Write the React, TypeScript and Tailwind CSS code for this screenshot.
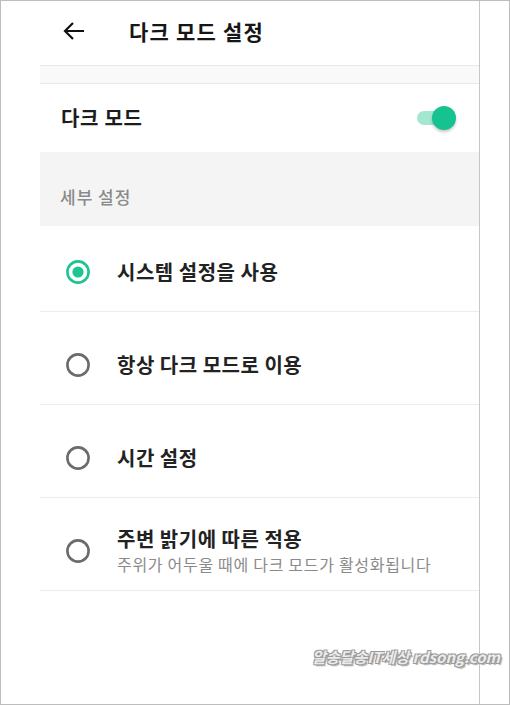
import React from "react";

const options = [
  { label: "시스템 설정을 사용", checked: true },
  { label: "항상 다크 모드로 이용" },
  { label: "시간 설정" },
  { label: "주변 밝기에 따른 적용", sub: "주위가 어두울 때에 다크 모드가 활성화됩니다" },
];

function Radio({ checked }: { checked?: boolean }) {
  return (
    <svg width="24" height="24" viewBox="0 0 24 24" className="shrink-0">
      <circle
        cx="12"
        cy="12"
        r="10.6"
        fill="none"
        stroke={checked ? "#1cc592" : "#6b6b6b"}
        strokeWidth="2.6"
      />
      {checked && <circle cx="12" cy="12" r="5.6" fill="#1cc592" />}
    </svg>
  );
}

function Toggle() {
  return (
    <div className="relative w-[39px] h-[24px]">
      <div className="absolute left-0 top-[5px] w-[30px] h-[14px] rounded-full bg-[#a4e7d0]" />
      <div className="absolute right-0 top-0 w-[24px] h-[24px] rounded-full bg-[#16c28f] shadow-[0_2px_3px_rgba(0,0,0,0.22)]" />
    </div>
  );
}

export default function App() {
  return (
    <div className="relative flex w-[510px] h-[705px] overflow-hidden border border-[#bdbdbd] bg-white font-['Noto_Sans_CJK_KR','Noto_Sans',sans-serif]">
      <div className="w-[39px] shrink-0" />
      <div className="flex w-[440px] shrink-0 flex-col border-r border-[#c6c6c6]">
        <header className="flex h-[65px] items-center border-b border-[#e8e8e8] pb-[4px] pl-[23px]">
          <svg width="22" height="20" viewBox="0 0 22 20" className="shrink-0">
            <path
              d="M21 10H2.5M10 2L2 10l8 8"
              fill="none"
              stroke="#111"
              strokeWidth="2.2"
            />
          </svg>
          <h1 className="ml-[44px] text-[21px] leading-[28px] font-bold tracking-[1.2px] text-[#161616]">
            다크 모드 설정
          </h1>
        </header>
        <div className="h-[18px] border-b border-[#e8e8e8] bg-[#f9f9f9]" />
        <div className="flex h-[68px] items-center justify-between pl-[21px] pr-[23px]">
          <span className="text-[20px] leading-[26px] font-semibold tracking-[0.7px] text-[#1c1c1c]">
            다크 모드
          </span>
          <Toggle />
        </div>
        <div className="h-[74px] bg-[#f4f4f4] pl-[20px] pt-[33px]">
          <span className="text-[17px] leading-[24px] font-medium tracking-[1px] text-[#8a8a8a]">
            세부 설정
          </span>
        </div>
        {options.map((o, i) => (
          <div
            key={o.label}
            className={
              i === 0
                ? "flex h-[86px] items-center border-b border-[#ececec] pl-[26px] pt-[7px]"
                : "flex h-[93px] items-center border-b border-[#ececec] pl-[26px] pt-[14px]"
            }
          >
            <Radio checked={o.checked} />
            <div className="ml-[27px] flex flex-col">
              <span className="text-[20px] leading-[26px] font-bold tracking-[0.5px] text-[#222]">
                {o.label}
              </span>
              {o.sub && (
                <span className="text-[16px] leading-[24px] tracking-[0.7px] text-[#8a8a8a]">
                  {o.sub}
                </span>
              )}
            </div>
          </div>
        ))}
      </div>
      <div className="absolute right-[9px] bottom-[36px] text-[15px] leading-[22px] font-bold italic text-[#ececec] [text-shadow:1px_1px_0_#9a9a9a,-1px_-1px_0_#9a9a9a,1px_-1px_0_#9a9a9a,-1px_1px_0_#9a9a9a,2px_2px_1px_#b0b0b0]">
        알송달송IT세상 rdsong.com
      </div>
    </div>
  );
}
